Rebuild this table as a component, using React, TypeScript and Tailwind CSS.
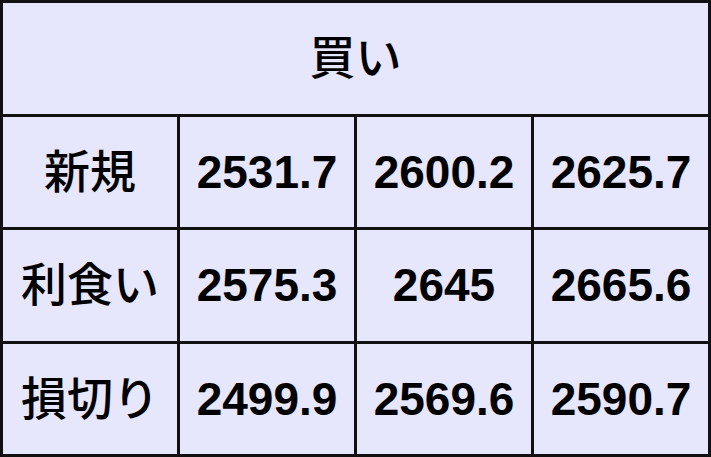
import React from "react";

const rows: [string, string, string, string][] = [
  ["新規", "2531.7", "2600.2", "2625.7"],
  ["利食い", "2575.3", "2645", "2665.6"],
  ["損切り", "2499.9", "2569.6", "2590.7"],
];

export default function App() {
  return (
    <div
      className="w-[711px] h-[457px] bg-[#111111] p-[3px] grid grid-cols-4 grid-rows-4 gap-[3px] text-black text-[46px]"
      style={{ fontFamily: '"Liberation Sans", Arial, "Noto Sans CJK JP", sans-serif' }}
    >
      <div className="col-span-4 bg-[#e6e6fc] flex items-center justify-center leading-none font-medium">
        買い
      </div>
      {rows.map((r) => (
        <React.Fragment key={r[0]}>
          {r.map((c, i) => (
            <div
              key={i}
              className={`bg-[#e6e6fc] flex items-center justify-center leading-none ${
                i === 0 ? "font-medium" : "font-bold"
              }`}
            >
              {c}
            </div>
          ))}
        </React.Fragment>
      ))}
    </div>
  );
}
